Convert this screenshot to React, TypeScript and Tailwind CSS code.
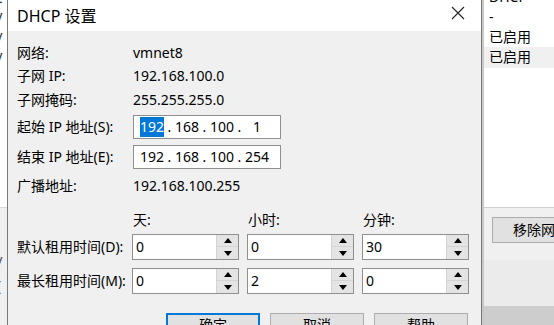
import React from 'react';

const font = "font-[family-name:'Noto_Sans','Noto_Sans_CJK_SC',sans-serif]";

const Spinner: React.FC = () => (
  <div className="flex w-[22px] flex-col border-l border-[#d4d4d4] bg-[#f0f0f0]">
    <div className="flex h-1/2 items-center justify-center border-b border-[#d4d4d4] bg-[#e4e4e4]">
      <svg width="8" height="5" viewBox="0 0 8 5"><path d="M0 5 L4 0 L8 5 Z" fill="#000" /></svg>
    </div>
    <div className="flex h-1/2 items-center justify-center bg-[#e4e4e4]">
      <svg width="8" height="5" viewBox="0 0 8 5"><path d="M0 0 L4 5 L8 0 Z" fill="#000" /></svg>
    </div>
  </div>
);

const SpinBox: React.FC<{ value: string }> = ({ value }) => (
  <div className="flex h-[26px] w-[107px] border border-[#8f8f8f] bg-white">
    <div className="flex-1 pl-[3px] text-[14px] leading-[24px]">{value}</div>
    <Spinner />
  </div>
);

const IpBox: React.FC<{ parts: string[]; selectFirst?: boolean }> = ({ parts, selectFirst }) => (
  <div className="flex h-[24px] w-[148px] items-center border border-[#8f8f8f] bg-white pl-[4px] text-[14px] leading-[20px]">
    {parts.map((p, i) => (
      <React.Fragment key={i}>
        <div className="flex w-[28px] justify-center">
          {i === 0 && selectFirst ? (
            <span className="bg-[#0078d7] text-white">{p}</span>
          ) : (
            <span>{p}</span>
          )}
        </div>
        {i < 3 && <div className="w-[7px] text-center">.</div>}
      </React.Fragment>
    ))}
  </div>
);

const InfoRow: React.FC<{ label: string; value: string; h: string }> = ({ label, value, h }) => (
  <div className={`flex items-center ${h}`}>
    <div className="w-[116px]">{label}</div>
    <div>{value}</div>
  </div>
);

export default function App() {
  return (
    <div className={`flex h-[325px] w-[554px] overflow-hidden bg-white text-[14px] text-black ${font}`}>
      {/* background window, left edge */}
      <div className="flex w-[7px] shrink-0 flex-col overflow-hidden">
        <div className="h-[207px] bg-white text-[14px] leading-[20px] text-[#333]">
          <div className="-ml-[5px] -mt-[12px]">E</div>
          <div className="-ml-[6px]">V</div>
          <div className="-ml-[6px]">V</div>
          <div className="-ml-[6px]">V</div>
        </div>
        <div className="flex-1 border-t border-[#d9d9d9] bg-[#f0f0f0] pt-[42px] text-[14px] leading-[24px] text-[#555]">
          <div className="-ml-[6px]">V</div>
          <div className="-ml-[3px]">(</div>
        </div>
      </div>

      {/* dialog */}
      <div className="flex w-[475px] shrink-0 flex-col border-x border-[#7a7a7a] bg-[#f0f0f0]">
        <div className="flex h-[31px] shrink-0 items-center justify-between bg-white">
          <div className="pl-[9px] text-[16px] leading-[20px]">DHCP 设置</div>
          <div className="flex h-[31px] w-[46px] items-center justify-center pb-[6px]">
            <svg width="14" height="14" viewBox="0 0 14 14">
              <path d="M1 1 L13 13 M13 1 L1 13" stroke="#222" strokeWidth="1.1" />
            </svg>
          </div>
        </div>

        <div className="flex flex-col pl-[9px] pt-[10px] leading-[20px]">
          <InfoRow label="网络:" value="vmnet8" h="h-[23px]" />
          <InfoRow label="子网 IP:" value="192.168.100.0" h="h-[23px]" />
          <InfoRow label="子网掩码:" value="255.255.255.0" h="h-[25px]" />

          <div className="mt-[3px] flex h-[24px] items-center">
            <div className="w-[116px]">起始 IP 地址(S):</div>
            <IpBox parts={['192', '168', '100', '1']} selectFirst />
          </div>
          <div className="mt-[6px] flex h-[24px] items-center">
            <div className="w-[116px]">结束 IP 地址(E):</div>
            <IpBox parts={['192', '168', '100', '254']} />
          </div>

          <InfoRow label="广播地址:" value="192.168.100.255" h="mt-[6px] h-[22px]" />

          <div className="mt-[13px] flex h-[20px] items-center">
            <div className="w-[116px]" />
            <div className="w-[115px]">天:</div>
            <div className="w-[115px]">小时:</div>
            <div>分钟:</div>
          </div>

          <div className="mt-[4px] flex items-center">
            <div className="w-[115px]">默认租用时间(D):</div>
            <div className="flex gap-[8px]">
              <SpinBox value="0" />
              <SpinBox value="0" />
              <SpinBox value="30" />
            </div>
          </div>
          <div className="mt-[8px] flex items-center">
            <div className="w-[115px]">最长租用时间(M):</div>
            <div className="flex gap-[8px]">
              <SpinBox value="0" />
              <SpinBox value="2" />
              <SpinBox value="0" />
            </div>
          </div>

          <div className="ml-[149px] mt-[19px] flex gap-[10px]">
            <button className="h-[24px] w-[94px] border-2 border-[#0078d7] bg-[#e1e1e1] text-[14px] leading-[20px]">确定</button>
            <button className="h-[24px] w-[94px] border border-[#adadad] bg-[#e1e1e1] text-[14px] leading-[22px]">取消</button>
            <button className="h-[24px] w-[94px] border border-[#adadad] bg-[#e1e1e1] text-[14px] leading-[22px]">帮助</button>
          </div>
        </div>
      </div>

      {/* background window, right side */}
      <div className="flex min-w-0 flex-1 flex-col overflow-hidden border-l-2 border-[#c8c8c8]">
        <div className="h-[207px] bg-white pl-[5px] text-[14px] leading-[20px]">
          <div className="-mt-[13px] h-[20px]">DHCP</div>
          <div className="h-[20px]">-</div>
          <div className="h-[20px]">已启用</div>
          <div className="-ml-[5px] h-[21px] bg-[#f0f0f0] pl-[5px]">已启用</div>
        </div>
        <div className="flex flex-1 flex-col border-t border-[#d0d0d0] bg-[#f0f0f0]">
          <div className="ml-[8px] mt-[9px] h-[26px] w-[90px] shrink-0 whitespace-nowrap border border-[#adadad] bg-[#e1e1e1] pl-[20px] text-[14px] leading-[24px]">
            移除网络
          </div>
          <div className="mt-[17px] h-[46px] bg-[#ebebeb]" />
          <div className="flex-1 bg-[#cdcdcd]" />
        </div>
      </div>
    </div>
  );
}
